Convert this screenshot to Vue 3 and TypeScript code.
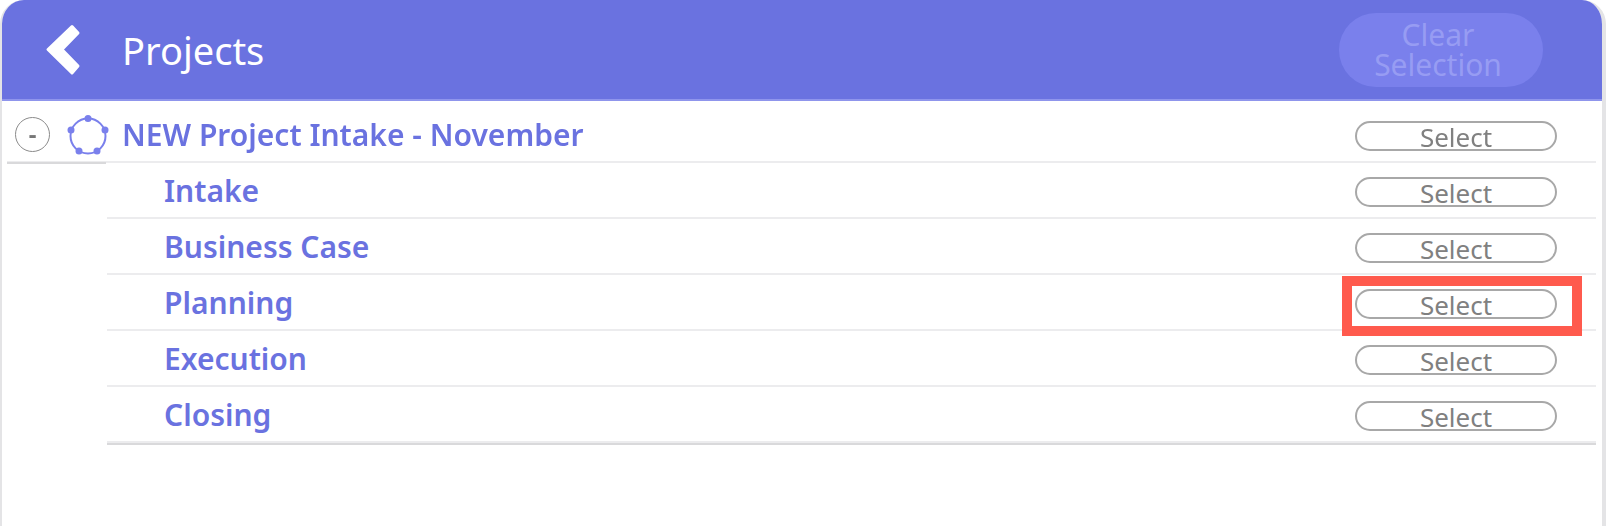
<script setup lang="ts">
const stages = ['Intake', 'Business Case', 'Planning', 'Execution', 'Closing']
</script>

<template>
  <div class="panel">
    <header class="head">
      <svg class="back" width="40" height="54" viewBox="0 0 40 54">
        <path d="M30 3.5 L36 10 L20 26.5 L36 43 L30 50 L6 26.5 Z" fill="#fff" stroke="#fff" stroke-width="3" stroke-linejoin="round" />
      </svg>
      <h1>Projects</h1>
      <button class="clear">Clear Selection</button>
    </header>
    <div class="tree">
      <div class="row top">
        <span class="toggle">-</span>
        <svg class="node" width="42" height="42" viewBox="0 0 42 42">
          <g fill="#7a80ec">
            <circle cx="21" cy="3.5" r="3.5" />
            <circle cx="38" cy="15" r="3.5" />
            <circle cx="30" cy="36" r="3.5" />
            <circle cx="12" cy="36" r="3.5" />
            <circle cx="4" cy="15" r="3.5" />
          </g>
          <circle cx="21" cy="21" r="17.5" fill="none" stroke="#7a80ec" stroke-width="2" />
        </svg>
        <span class="name">NEW Project Intake - November</span>
        <button class="select">Select</button>
      </div>
      <div class="children">
        <div v-for="s in stages" :key="s" class="row child">
          <span class="name">{{ s }}</span>
          <span class="select-wrap" :class="{ marked: s === 'Planning' }">
            <button class="select">Select</button>
          </span>
        </div>
      </div>
    </div>
  </div>
</template>

<style>
html,
body {
  margin: 0;
  background: #fff;
}
</style>

<style scoped>
.panel {
  width: 1606px;
  height: 526px;
  box-sizing: border-box;
  border-left: 2px solid #e4e4e6;
  border-right: 4px solid #e4e4e6;
  border-radius: 24px 24px 0 0;
  overflow: hidden;
  font-family: "Noto Sans", sans-serif;
  background: #fff;
  filter: blur(0.5px);
}
.head {
  height: 101px;
  margin: 0 -4px 0 -2px;
  background: #6a72e0;
  border-bottom: 2px solid #8f95ec;
  box-sizing: border-box;
  display: flex;
  align-items: center;
  padding-left: 42px;
}
.back {
  flex: none;
  margin-right: 40px;
}
h1 {
  margin: 0;
  font-size: 38px;
  font-weight: 400;
  color: #fff;
}
.clear {
  margin-left: auto;
  margin-right: 63px;
  width: 204px;
  height: 74px;
  border: 0;
  border-radius: 37px;
  background: #7a80ec;
  color: #979cf3;
  font: 400 30px/30px "Noto Sans", sans-serif;
  padding: 0 36px 0 30px;
}
.tree {
  padding-right: 6px;
}
.row {
  display: flex;
  align-items: center;
  box-sizing: border-box;
}
.top {
  height: 62px;
  margin-left: 5px;
  padding-top: 6px;
  padding-left: 8px;
  padding-right: 39px;
  border-bottom: 2px solid #ececee;
  position: relative;
}
.top .select {
  margin-top: 4px;
}
.top::after {
  content: "";
  position: absolute;
  left: 0;
  bottom: -3px;
  width: 99px;
  height: 2px;
  background: #d9d9db;
}
.toggle {
  width: 35px;
  height: 35px;
  box-sizing: border-box;
  border: 1px solid #8a8a8a;
  border-radius: 50%;
  display: flex;
  align-items: center;
  justify-content: center;
  font-size: 24px;
  font-weight: 700;
  line-height: 30px;
  color: #777;
  flex: none;
}
.node {
  flex: none;
  margin-left: 17px;
  margin-right: 13px;
  margin-top: 3px;
}
.name {
  font-size: 30px;
  font-weight: 600;
  color: #6a72e0;
}
.children {
  margin-left: 105px;
  border-bottom: 2px solid #d9d9db;
}
.child {
  height: 56px;
  padding-left: 57px;
  padding-right: 39px;
  border-bottom: 2px solid #ececee;
}
.select-wrap {
  margin-left: auto;
  margin-top: 4px;
  display: block;
  position: relative;
}
.select-wrap.marked::after {
  content: "";
  position: absolute;
  left: -13px;
  right: -25px;
  top: -13px;
  bottom: -17px;
  border: 10px solid #ff5a4d;
  pointer-events: none;
}
.select {
  display: block;
  margin-left: auto;
  width: 202px;
  height: 30px;
  padding: 2px 0 0;
  box-sizing: border-box;
  border: 2px solid #a8a8a8;
  border-radius: 16px;
  background: #fff;
  color: #808080;
  font: 400 26px/24px "Noto Sans", sans-serif;
  overflow: visible;
}
</style>
